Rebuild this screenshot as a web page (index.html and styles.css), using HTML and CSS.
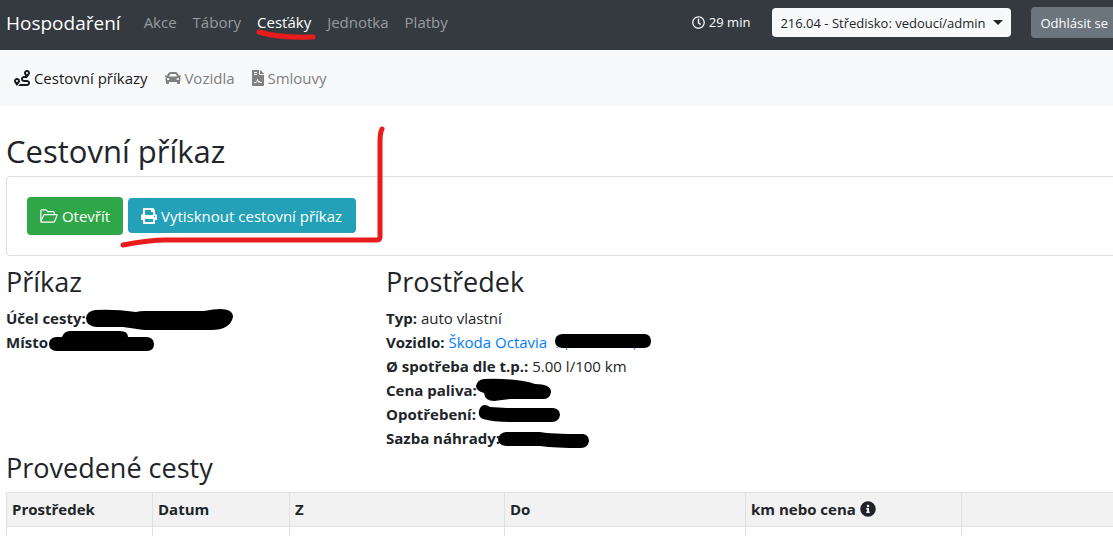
FILE: index.html
```html
<!DOCTYPE html>
<html lang="cs">
<head>
    <meta charset="UTF-8">
    <meta name="viewport" content="width=device-width, initial-scale=1.0">
    <title>Hospodaření - Cestovní příkaz</title>
    <link rel="stylesheet" href="styles.css">
</head>
<body>
    <header class="navbar">
        <a class="brand" href="#">Hospodaření</a>
        <nav class="nav">
            <a href="#">Akce</a>
            <a href="#">Tábory</a>
            <a href="#" class="active">Cesťáky</a>
            <a href="#">Jednotka</a>
            <a href="#">Platby</a>
        </nav>
        <div class="user">
            <span class="timer">
                <svg class="icon" viewBox="0 0 512 512"><path d="M256 8C119 8 8 119 8 256s111 248 248 248 248-111 248-248S393 8 256 8zm0 448c-110.500 0-200-89.500-200-200S145.500 56 256 56s200 89.500 200 200-89.500 200-200 200zm61.800-104.400l-84.900-61.700c-3.100-2.300-4.900-5.900-4.900-9.700V116c0-6.600 5.400-12 12-12h32c6.600 0 12 5.400 12 12v141.700l66.800 48.600c5.400 3.900 6.500 11.400 2.600 16.800L334.600 349c-3.900 5.300-11.400 6.500-16.800 2.600z"/></svg>
                29 min
            </span>
            <button type="button" class="btn-role">216.04 - Středisko: vedoucí/admin</button>
            <button type="button" class="btn-logout">Odhlásit se</button>
        </div>
    </header>

    <nav class="subnav">
        <a href="#" class="active">
            <svg class="icon" viewBox="0 0 512 512"><path fill-rule="evenodd" d="M416 320h-96c-17.600 0-32-14.400-32-32s14.400-32 32-32h96s96-107 96-160-43-96-96-96-96 43-96 96c0 25.500 22.200 63.400 45.300 96H320c-52.900 0-96 43.100-96 96s43.100 96 96 96h96c17.600 0 32 14.400 32 32s-14.400 32-32 32H185.500c-16 24.800-33.800 47.700-47.300 64H416c52.900 0 96-43.100 96-96s-43.100-96-96-96zm0-256c17.700 0 32 14.300 32 32s-14.300 32-32 32-32-14.300-32-32 14.300-32 32-32zM96 256c-53 0-96 43-96 96s96 160 96 160 96-107 96-160-43-96-96-96zm0 128c-17.700 0-32-14.300-32-32s14.300-32 32-32 32 14.300 32 32-14.300 32-32 32z"/></svg>
            Cestovní příkazy
        </a>
        <a href="#">
            <svg class="icon" viewBox="0 0 512 512"><path d="M499.990 176h-59.870l-16.640-41.600C406.380 91.630 365.570 64 319.500 64h-127c-46.060 0-86.880 27.630-103.990 70.400L71.870 176H12.010C4.200 176-1.530 183.340.370 190.910l6 24C7.700 220.250 12.500 224 18.010 224h20.070C24.650 235.730 16 252.780 16 272v48c0 16.120 6.160 30.670 16 41.930V416c0 17.670 14.330 32 32 32h32c17.670 0 32-14.330 32-32v-32h256v32c0 17.670 14.330 32 32 32h32c17.670 0 32-14.330 32-32v-54.070c9.840-11.250 16-25.800 16-41.930v-48c0-19.220-8.650-36.270-22.070-48H494c5.510 0 10.310-3.750 11.640-9.090l6-24c1.890-7.570-3.840-14.910-11.650-14.910zm-352.060-17.830c7.290-18.220 24.940-30.170 44.570-30.170h127c19.630 0 37.280 11.950 44.570 30.170L384 208H128l19.930-49.830zM96 319.800c-19.200 0-32-12.760-32-31.900S76.800 256 96 256s48 28.710 48 47.850-28.800 15.950-48 15.950zm320 0c-19.200 0-48 3.190-48-15.950S396.800 256 416 256s32 12.760 32 31.900-12.800 31.900-32 31.900z"/></svg>
            Vozidla
        </a>
        <a href="#">
            <svg class="icon icon-file" viewBox="0 0 384 512"><path fill-rule="evenodd" d="M224 0v136c0 13 11 24 24 24h136v328c0 13-11 24-24 24H24c-13 0-24-11-24-24V24C0 11 11 0 24 0zM64 64v32h96V64zm0 64v32h96v-32zm0 288h55c26 0 43-12 51-38l12-37 25 63c4 10 16 10 20 2l10-15c8 16 25 25 43 25h40v-32h-40c-7 0-12-4-16-10-12-22-38-25-50-10l-21-53c-5-17-29-17-34 1l-20 60c-3 8-10 12-20 12H64zM256 0h8l120 120v8H256z"/></svg>
            Smlouvy
        </a>
    </nav>

    <main class="content">
        <h1>Cestovní příkaz</h1>
        <div class="card">
            <button type="button" class="btn btn-success">
                <svg class="icon icon-folder" viewBox="0 0 576 448"><path fill="none" stroke="currentColor" stroke-width="38" stroke-linejoin="round" d="M28 390V55q0-30 30-30h130l60 60h180q30 0 30 30v65M28 400l90-200q10-20 30-20h370q40 0 25 30l-75 180q-10 30-40 30H50q-30 0-22-20z"/></svg>
                Otevřít
            </button>
            <button type="button" class="btn btn-info">
                <svg class="icon" viewBox="0 0 512 512"><path fill-rule="evenodd" d="M448 192V77c0-8-3-17-9-23L394 9c-6-6-14-9-23-9H96C78 0 64 14 64 32v160c-35 0-64 29-64 64v112c0 9 7 16 16 16h48v96c0 18 14 32 32 32h320c18 0 32-14 32-32v-96h48c9 0 16-7 16-16V256c0-35-29-64-64-64zm-64 256H128v-96h256zm0-224H128V64h192v48c0 9 7 16 16 16h48zm48 72a24 24 0 1 1 0-48 24 24 0 0 1 0 48z"/></svg>
                Vytisknout cestovní příkaz
            </button>
        </div>

        <div class="row">
            <section class="col-order">
                <h2>Příkaz</h2>
                <p><b>Účel cesty:</b></p>
                <p><b>Místo</b></p>
            </section>
            <section class="col-vehicle">
                <h2>Prostředek</h2>
                <p><b>Typ:</b> auto vlastní</p>
                <p><b>Vozidlo:</b> <a href="#">Škoda Octavia</a></p>
                <p><b>Ø spotřeba dle t.p.:</b> 5.00 l/100 km</p>
                <p><b>Cena paliva:</b></p>
                <p><b>Opotřebení:</b></p>
                <p><b>Sazba náhrady:</b></p>
            </section>
        </div>

        <h2>Provedené cesty</h2>
        <table class="trips">
            <colgroup>
                <col class="w-type">
                <col class="w-date">
                <col class="w-from">
                <col class="w-to">
                <col class="w-price">
                <col>
            </colgroup>
            <thead>
                <tr>
                    <th>Prostředek</th>
                    <th>Datum</th>
                    <th>Z</th>
                    <th>Do</th>
                    <th>km nebo cena
                        <svg class="icon" viewBox="0 0 512 512"><path fill-rule="evenodd" d="M256 8a248 248 0 1 0 0 496 248 248 0 0 0 0-496zm0 110a42 42 0 1 1 0 84 42 42 0 0 1 0-84zm56 254c0 7-5 12-12 12h-88c-7 0-12-5-12-12v-24c0-7 5-12 12-12h12v-64h-12c-7 0-12-5-12-12v-24c0-7 5-12 12-12h64c7 0 12 5 12 12v100h12c7 0 12 5 12 12z"/></svg>
                    </th>
                    <th></th>
                </tr>
            </thead>
            <tbody>
                <tr><td></td><td></td><td></td><td></td><td></td><td></td></tr>
            </tbody>
        </table>
    </main>

    <!-- pen marks over the page -->
    <svg class="marks" width="700" height="460" viewBox="0 0 700 460">
        <g class="pen-red">
            <path d="M259 32Q278 38 313 37"/>
            <path d="M382 129Q380 133 380 142V237Q380 240 376 240H165Q150 240 123 245"/>
        </g>
        <g class="pen-blue">
            <path d="M557 347v1M565 345q1 3 2 5M636 345q-1 4-2 5"/>
        </g>
        <g class="pen-black">
            <path d="M95 310Q115 309 136 312Q139 311 145 311H204Q233 305 233 317Q230 330 211 330H144L123 327H96Q86 326 86 318Q87 311 95 310z"/>
            <path d="M56 337H62Q64 331 70 331H120Q128 331 128 337H147Q154 338 154 344Q154 351 147 351H56Q49 350 49 344Q49 338 56 337z"/>
            <path d="M562 334H645Q651 335 651 341Q651 348 644 348H562Q555 347 555 341Q555 335 562 334z"/>
            <path d="M484 379Q518 378 535 384Q551 384 551 392Q550 399 544 399H510L494 401Q485 401 484 393Q476 391 476 386Q477 380 484 379z"/>
            <path d="M484 405Q488 405 490 407L507 408H553Q560 409 560 415Q559 422 552 422H510Q493 422 483 419Q478 417 479 411Q480 406 484 405z"/>
            <path d="M506 432H540Q551 434 583 434Q589 435 589 441Q588 448 581 448Q556 448 540 446H506Q498 445 498 439Q499 433 506 432z"/>
        </g>
    </svg>
</body>
</html>
```
FILE: styles.css
```css
* {
    box-sizing: border-box;
}

body {
    margin: 0;
    position: relative;
    overflow: hidden;
    font-family: "Open Sans", "Noto Sans", sans-serif;
    font-size: 15px;
    line-height: 24px;
    color: #212529;
    background: #fff;
}

a {
    color: #007bff;
    text-decoration: none;
}

button {
    font: inherit;
    border: 0;
    border-radius: 4px;
    cursor: pointer;
    white-space: nowrap;
}

.icon {
    width: 16px;
    height: 16px;
    fill: currentColor;
    vertical-align: -2px;
}

.icon-file {
    width: 12px;
}

.icon-folder {
    width: 18px;
    height: 14px;
    vertical-align: -1px;
}

.navbar {
    display: flex;
    align-items: center;
    height: 50px;
    padding-left: 6px;
    background: #343a40;
    white-space: nowrap;
}

.brand {
    font-size: 19px;
    color: #fff;
    margin-right: 15px;
    padding-bottom: 5px;
}

.nav {
    display: flex;
    padding-bottom: 6px;
}

.nav a {
    padding: 0 8px;
    color: #999c9f;
}

.nav .active {
    color: #fff;
}

.user {
    display: flex;
    align-items: center;
    margin-left: auto;
    padding-bottom: 5px;
    font-size: 13px;
    color: #fff;
}

.timer {
    margin-right: 22px;
    padding-bottom: 2px;
}

.timer .icon {
    width: 13px;
    height: 13px;
}

.btn-role {
    height: 29px;
    padding: 0 8px;
    margin-right: 20px;
    color: #212529;
    background: #f8f9fa;
}

.btn-role::after {
    content: "";
    display: inline-block;
    margin-left: 8px;
    vertical-align: 3px;
    border-top: 5px solid;
    border-left: 5px solid transparent;
    border-right: 5px solid transparent;
}

.btn-logout {
    height: 31px;
    padding: 0 5px 0 9px;
    border-radius: 4px 0 0 4px;
    color: #fff;
    background: #6c757d;
}

.subnav {
    display: flex;
    gap: 17px;
    padding: 16px 14px;
    background: #f8f9fa;
}

.subnav a {
    color: #808080;
}

.subnav .active {
    color: #191919;
}

.content {
    margin-right: -24px;
    padding: 26px 0 0 6px;
}

h1,
h2 {
    margin: 0 0 8px;
    font-weight: 500;
}

h1 {
    font-size: 31px;
    line-height: 38px;
    margin-bottom: 6px;
}

h2 {
    font-size: 27px;
    line-height: 32px;
}

.card {
    display: flex;
    align-items: flex-start;
    gap: 5px;
    padding: 20px;
    margin-bottom: 10px;
    border: 1px solid #dfdfdf;
    border-radius: 4px;
}

.btn {
    padding: 0 13px;
    color: #fff;
}

.btn-success {
    height: 38px;
    background: #2fa749;
}

.btn-info {
    height: 35px;
    margin-top: 1px;
    padding: 0 14px 0 13px;
    background: #24a1b8;
}

.row {
    display: flex;
    margin-bottom: 2px;
}

.col-order {
    flex: 0 0 380px;
}

.col-vehicle {
    flex: 1;
}

.row p {
    margin: 0;
}

.trips {
    width: 100%;
    border-collapse: collapse;
    table-layout: fixed;
}

.trips th,
.trips td {
    height: 34px;
    padding: 3px 5px 5px;
    border: 1px solid #dee2e6;
    text-align: left;
}

.trips th {
    background: #f2f2f2;
}

.w-type {
    width: 146px;
}

.w-date {
    width: 137px;
}

.w-from {
    width: 215px;
}

.w-to {
    width: 241px;
}

.w-price {
    width: 216px;
}

.marks {
    position: absolute;
    top: 0;
    left: 0;
    pointer-events: none;
}

.pen-red {
    fill: none;
    stroke: #e81c1c;
    stroke-width: 5;
    stroke-linecap: round;
}

.pen-blue {
    fill: none;
    stroke: #007bff;
}
```
